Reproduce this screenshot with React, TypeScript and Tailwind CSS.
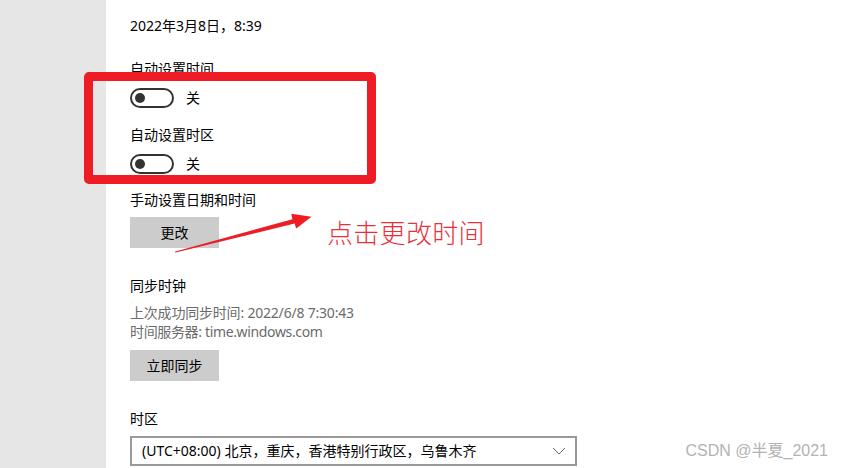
import React from "react";

const ui = { fontFamily: '"Noto Sans", "Noto Sans CJK SC", sans-serif' };

function Toggle() {
  return (
    <div className="flex items-center h-[20px]">
      <div className="w-[44px] h-[20px] rounded-full border-2 border-[#333333] flex items-center pl-[3px] box-border">
        <div className="w-[10px] h-[10px] rounded-full bg-[#333333]" />
      </div>
      <span className="ml-[12px] text-[14px] leading-[20px] text-black">关</span>
    </div>
  );
}

export default function App() {
  return (
    <div className="relative w-[842px] h-[468px] overflow-hidden bg-white flex" style={ui}>
      <div className="w-[106px] h-full bg-[#e6e6e6] shrink-0" />
      <div className="flex-1 flex flex-col pl-[24px] pt-[16px] text-[14px] leading-[20px] text-black">
        <div>2022年3月8日，8:39</div>
        <div className="mt-[23px]">自动设置时间</div>
        <div className="mt-[9px]">
          <Toggle />
        </div>
        <div className="mt-[17px]">自动设置时区</div>
        <div className="mt-[9px]">
          <Toggle />
        </div>
        <div className="mt-[16px]">手动设置日期和时间</div>
        <button className="mt-[7px] w-[89px] h-[31px] bg-[#cccccc] text-[14px] text-black flex items-center justify-center">
          更改
        </button>
        <div className="mt-[28px]">同步时钟</div>
        <div className="mt-[7px] text-[#6b6b6b] leading-[19px]">
          <div className="tracking-[-0.2px]">上次成功同步时间: 2022/6/8 7:30:43</div>
          <div className="tracking-[-0.35px]">时间服务器: time.windows.com</div>
        </div>
        <button className="mt-[9px] w-[89px] h-[31px] bg-[#cccccc] text-[14px] text-black flex items-center justify-center">
          立即同步
        </button>
        <div className="mt-[28px]">时区</div>
        <div className="mt-[7px] w-[447px] h-[30px] border-2 border-[#999999] flex items-center pl-[10px] pr-[8px] box-border shrink-0">
          <span className="flex-1 text-black">(UTC+08:00) 北京，重庆，香港特别行政区，乌鲁木齐</span>
          <svg width="14" height="8" viewBox="0 0 14 8" className="mr-[1px]">
            <path d="M1 1 L7 7 L13 1" fill="none" stroke="#707070" strokeWidth="1" />
          </svg>
        </div>
      </div>

      {/* red annotation box */}
      <div className="absolute left-[84px] top-[72px] w-[292px] h-[112px] border-[9px] border-[#ee1d25] rounded-[5px] box-border" />

      {/* arrow */}
      <svg className="absolute left-0 top-0" width="842" height="468" viewBox="0 0 842 468">
        <polygon
          points="174.5,251.8 292.4,219.2 291.3,213.8 311.5,216.8 296.2,228.6 294.6,223.6 175.6,252.6"
          fill="#ee1d25"
        />
      </svg>

      <div
        className="absolute left-[327px] top-[219px] text-[26px] leading-[26px] text-[#e8303a] tracking-[0.3px]"
        style={{ fontFamily: '"Noto Sans CJK SC", sans-serif', fontWeight: 300 }}
      >
        点击更改时间
      </div>

      <div
        className="absolute right-[14px] top-[441px] text-[16px] leading-[20px] text-[#b3b3b3]"
        style={{ fontFamily: '"Liberation Sans", "Noto Sans CJK SC", sans-serif' }}
      >
        CSDN @半夏_2021
      </div>
    </div>
  );
}
